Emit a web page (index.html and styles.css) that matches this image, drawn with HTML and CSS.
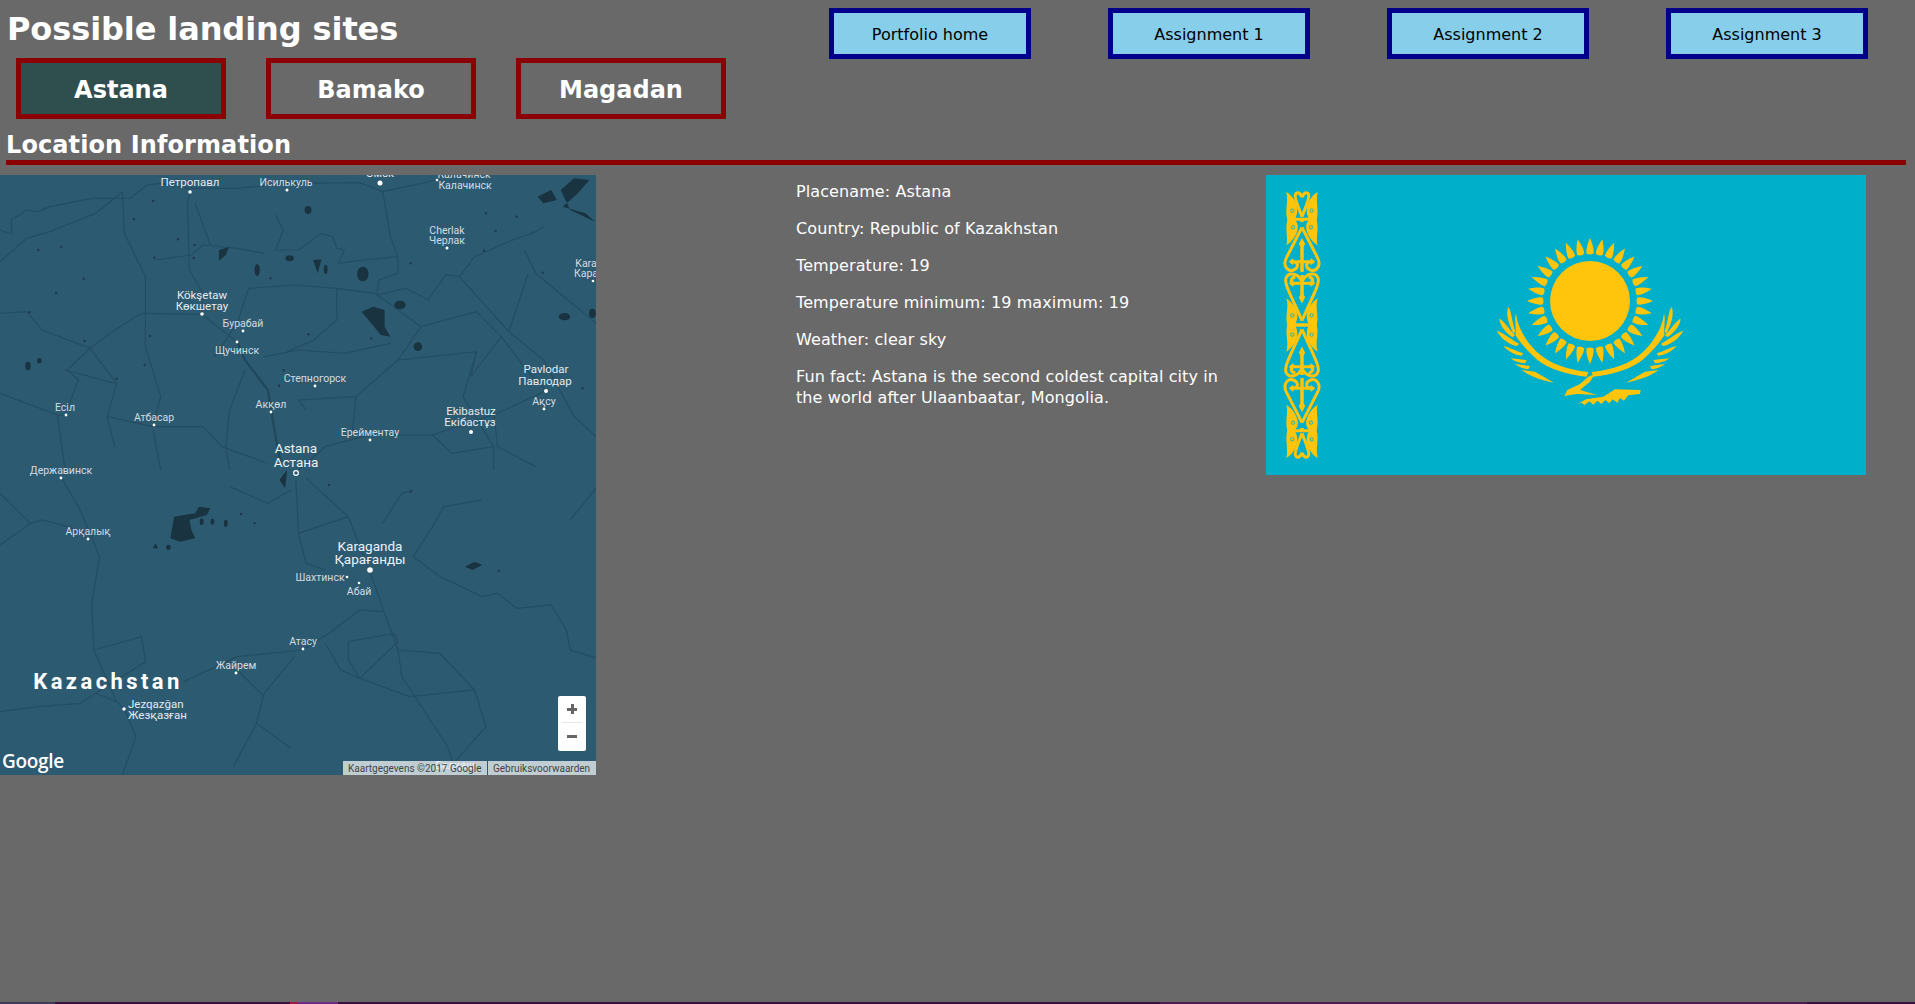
FILE: index.html
```html
<!DOCTYPE html>
<html>

<head>
    <meta http-equiv="Content-Type" content="text/html;charset=UTF-8" />
    <title>Possible landing sites</title>
    <link rel="stylesheet" href="styles.css">
</head>

<body>
    <div class="wrap">
        <div class="top_wrap">
            <div class="top_left">
                <h1 class="page_title">Possible landing sites</h1>
                <div class="site_list">
                    <a class="site_btn active">Astana</a>
                    <a class="site_btn">Bamako</a>
                    <a class="site_btn">Magadan</a>
                </div>
            </div>
            <nav class="main_nav">
                <a class="nav_btn">Portfolio home</a>
                <a class="nav_btn">Assignment 1</a>
                <a class="nav_btn">Assignment 2</a>
                <a class="nav_btn">Assignment 3</a>
            </nav>
        </div>
        <h2 class="section_title">Location Information</h2>
        <div class="content_wrap">
            <div class="map_box">
                <svg class="map_svg" width="596" height="600" viewBox="0 0 596 600">
                    <rect width="596" height="600" fill="#2c5a71" />
                    <!-- north half -->
                    <g transform="translate(0 -5) scale(.3827 .3333)">
                        <g class="road">
                            <path d="M0 180L30 192L30 148L60 130L65 120L100 125L130 110L240 85L340 85L385 45L420 40L490 55L620 55L750 40L940 38L1000 65L1140 30" />
                            <path d="M497 66L490 100L495 300L530 370L527 433L620 516" />
                            <path d="M0 430L70 425L110 480L235 535L300 480L370 430L527 433" />
                            <path d="M0 275L70 205L130 185L250 130L320 65" />
                            <path d="M235 535L175 600L205 630L170 735L150 735L170 900" />
                            <path d="M235 535L305 640L280 740L300 830" />
                            <path d="M280 740L400 770L530 770L580 830L700 880" />
                            <path d="M650 355L770 345L880 355L980 370L1100 470L1245 425L1310 500L1375 600L1427 662" />
                            <path d="M720 135L740 180L720 240L780 240L840 190L870 200L880 235L900 240L885 280L950 270L1040 260L1040 310L990 330L985 375L1060 355L1120 390L1130 370L1165 315L1200 320L1240 260L1340 210L1400 185L1420 170" />
                            <path d="M1200 320L1330 485L1420 570L1500 740L1558 800" />
                            <path d="M1370 240L1400 310L1568 470" />
                            <path d="M1040 570L1245 545L1230 620L1310 500" />
                            <path d="M690 560L780 540L900 550L1020 520" />
                            <path d="M1427 662L1300 730L1130 795L966 795L850 830L780 900" />
                            <path d="M650 355L620 460L560 560" />
                            <path d="M880 355L880 450L820 510L750 545" />
                            <path d="M1000 65L1020 200L1040 260" />
                            <path d="M1100 470L1040 570L930 680L780 690L800 720" />
                            <path d="M640 600L600 720L590 830L600 900" />
                            <path d="M1245 545L1210 680L1290 830L1290 900" />
                            <path d="M1330 485L1380 310" />
                            <path d="M0 670L150 735" />
                            <path d="M930 680L920 800" />
                            <path d="M320 65L325 190L380 320L380 530L420 680L400 770" />
                            <path d="M530 225L620 235L690 250" />
                            <path d="M405 270L500 255L530 225" />
                            <path d="M510 100L550 225" />
                            <path d="M1130 795L1180 850L1290 830" />
                            <path d="M1290 720L1300 830L1400 890" />
                            <path d="M400 780L420 900" />
                            <path d="M170 600L300 640" />
                        </g>
                        <path class="road_main" d="M620 516L640 570L700 660L720 800L735 890" />
                        <g class="lake">
                            <path d="M945 425L975 410L1005 420L1005 470L1020 500L995 495L970 460Z" />
                            <path d="M572 240L598 232L590 255L572 272Z" />
                            <path d="M1465 60L1500 25L1540 30L1510 70L1470 110L1530 130L1555 155L1490 120Z" />
                            <path d="M1405 80L1440 60L1455 90L1420 100Z" />
                            <path d="M818 270L840 268L830 310Z" />
                            <ellipse cx="672" cy="300" rx="7" ry="18" />
                            <ellipse cx="757" cy="265" rx="11" ry="9" />
                            <ellipse cx="805" cy="120" rx="9" ry="12" />
                            <ellipse cx="948" cy="312" rx="15" ry="22" />
                            <ellipse cx="1045" cy="405" rx="15" ry="13" />
                            <ellipse cx="851" cy="298" rx="5" ry="14" />
                            <ellipse cx="1092" cy="530" rx="11" ry="13" />
                            <ellipse cx="1475" cy="440" rx="15" ry="11" />
                            <ellipse cx="1548" cy="430" rx="9" ry="14" />
                            <ellipse cx="73" cy="588" rx="7" ry="13" />
                            <ellipse cx="103" cy="572" rx="6" ry="8" />
                        </g>
                        <path class="lake_dots" d="M400 93h0M350 148h0M465 208h0M508 225h0M403 263h0M506 264h0M707 325h0M1073 280h0M1418 308h0M1265 242h0M1522 655h0M147 369h0M219 326h0M77 427h0M392 498h0M378 585h0M305 626h0M729 647h0M741 601h0M806 493h0M970 505h0M1270 130h0M1350 140h0M1295 183h0M100 240h0M160 230h0M221 513h0" />
                    </g>
                    <!-- south half -->
                    <g transform="translate(0 295) scale(.3827 .3333)">
                        <g class="road">
                            <path d="M160 23L210 120L260 260L240 400L245 540L305 695" />
                            <path d="M773 30L780 190L800 280L850 300" />
                            <path d="M800 25L910 140L965 300L1005 430L1040 540L1050 620L1170 830L1190 900" />
                            <path d="M1000 160L1050 70L1080 60" />
                            <path d="M1080 260L1150 320L1260 380L1300 370L1350 415L1440 405L1480 480L1490 540L1560 565" />
                            <path d="M1260 90L1160 110L1130 170L1080 260" />
                            <path d="M480 635L620 560L790 540L860 490L940 420L1000 425" />
                            <path d="M0 225L80 160L110 150L180 170L230 207" />
                            <path d="M0 70L80 160" />
                            <path d="M0 725L100 710L210 700L250 670L305 695L325 717L355 800L320 915" />
                            <path d="M245 540L370 500L380 575L250 670" />
                            <path d="M690 670L770 560" />
                            <path d="M690 670L670 760L610 890" />
                            <path d="M620 600L690 680" />
                            <path d="M670 760L760 835" />
                            <path d="M850 520L890 600L940 625L1070 680L1240 660L1270 770L1170 900" />
                            <path d="M910 515L1030 490L1040 515L940 625L910 570Z" />
                            <path d="M1040 540L1150 550L1240 660" />
                            <path d="M780 190L910 140" />
                            <path d="M600 50L700 100L760 60" />
                            <path d="M1490 150L1560 50" />
                        </g>
                        <g class="lake">
                            <path d="M455 140L510 130L520 110L550 115L540 135L495 150L500 180L510 205L470 215L445 205Z" />
                            <path d="M730 30L750 0L745 55Z" />
                            <path d="M1215 290L1240 275L1260 285L1235 300Z" />
                            <path d="M400 235L406 220L413 235Z" />
                            <ellipse cx="440" cy="232" rx="6" ry="8" />
                            <ellipse cx="527" cy="155" rx="5" ry="10" />
                            <ellipse cx="555" cy="155" rx="5" ry="9" />
                            <ellipse cx="590" cy="160" rx="5" ry="11" />
                        </g>
                        <path class="lake_dots" d="M1303 302h0M1073 65h0M665 160h0M630 132h0M860 45h0" />
                    </g>
                    <g class="map_dots">
                        <circle cx="190" cy="17" r="1.8" /><circle cx="287" cy="15" r="1.5" />
                        <circle cx="380" cy="8" r="2.5" /><circle cx="437" cy="5" r="1.3" />
                        <circle cx="447" cy="73" r="1.5" /><circle cx="593" cy="106" r="1.3" />
                        <circle cx="202" cy="139" r="1.8" /><circle cx="243" cy="156" r="1.4" />
                        <circle cx="237" cy="167" r="1.4" /><circle cx="315" cy="211" r="1.4" />
                        <circle cx="546" cy="216" r="2" /><circle cx="271" cy="237" r="1.4" />
                        <circle cx="544" cy="234" r="1.4" /><circle cx="66" cy="240" r="1.4" />
                        <circle cx="154" cy="250" r="1.4" /><circle cx="471" cy="257" r="2" />
                        <circle cx="370" cy="265" r="1.4" /><circle cx="61" cy="303" r="1.4" />
                        <circle cx="88" cy="364" r="1.4" /><circle cx="370" cy="395" r="2.8" />
                        <circle cx="347" cy="402" r="1.3" /><circle cx="359" cy="408" r="1.3" />
                        <circle cx="303" cy="474" r="1.4" /><circle cx="236" cy="498" r="1.4" />
                        <circle cx="124" cy="534" r="1.7" />
                        <circle cx="296" cy="298" r="2.4" fill="none" stroke="#fff" stroke-width="1.2" />
                    </g>
                    <g class="map_label">
                        <text x="190" y="11">Петропавл</text>
                        <text x="286" y="11" class="small">Исилькуль</text>
                        <text x="380" y="2">Омск</text>
                        <text x="464" y="3" class="small">Калачинск</text>
                        <text x="465" y="14" class="small">Калачинск</text>
                        <text x="447" y="59" class="small">Cherlak</text>
                        <text x="447" y="69" class="small">Черлак</text>
                        <text x="586" y="92" class="small">Kara</text>
                        <text x="586" y="102" class="small">Кара</text>
                        <text x="202" y="124">Kökşetaw</text>
                        <text x="202" y="135">Көкшетау</text>
                        <text x="243" y="152" class="small">Бурабай</text>
                        <text x="237" y="179" class="small">Щучинск</text>
                        <text x="315" y="207" class="small">Степногорск</text>
                        <text x="546" y="198">Pavlodar</text>
                        <text x="545" y="210">Павлодар</text>
                        <text x="271" y="233" class="small">Акқөл</text>
                        <text x="544" y="230" class="small">Ақсу</text>
                        <text x="65" y="236" class="small">Есіл</text>
                        <text x="154" y="246" class="small">Атбасар</text>
                        <text x="471" y="240">Ekibastuz</text>
                        <text x="470" y="251">Екібастұз</text>
                        <text x="370" y="261" class="small">Ерейментау</text>
                        <text x="296" y="278" class="big">Astana</text>
                        <text x="296" y="292" class="big">Астана</text>
                        <text x="61" y="299" class="small">Державинск</text>
                        <text x="88" y="360" class="small">Арқалық</text>
                        <text x="370" y="376" class="big">Karaganda</text>
                        <text x="370" y="389" class="big">Қарағанды</text>
                        <text x="320" y="406" class="small">Шахтинск</text>
                        <text x="359" y="420" class="small">Абай</text>
                        <text x="303" y="470" class="small">Атасу</text>
                        <text x="236" y="494" class="small">Жайрем</text>
                        <text x="128" y="533" class="left">Jezqazğan</text>
                        <text x="128" y="544" class="left">Жезқазған</text>
                        <text x="455" y="594" class="small">Балқаш</text>
                        <text x="108" y="514" class="country">Kazachstan</text>
                    </g>
                </svg>
                <span class="map_logo">Google</span>
                <div class="map_zoom">
                    <button class="zoom_btn zoom_in"></button>
                    <button class="zoom_btn zoom_out"></button>
                </div>
                <div class="map_attr">
                    <span class="attr_item attr_data">Kaartgegevens ©2017 Google</span>
                    <span class="attr_item attr_terms">Gebruiksvoorwaarden</span>
                </div>
            </div>
            <div class="info_box">
                <p>Placename: Astana</p>
                <p>Country: Republic of Kazakhstan</p>
                <p>Temperature: 19</p>
                <p>Temperature minimum: 19 maximum: 19</p>
                <p>Weather: clear sky</p>
                <p>Fun fact: Astana is the second coldest capital city in the world after Ulaanbaatar, Mongolia.</p>
            </div>
            <svg class="flag" width="600" height="300" viewBox="0 0 600 300">
                <defs>
                    <path id="ray" d="M0 -63C3 -56 4 -51 3.6 -47.5Q0 -45.5 -3.6 -47.5C-4 -51 -3 -56 0 -63Z" />
                    <g id="orn_half">
                        <path class="orn_fill" d="M79 66C98 76 110 98 112 120C112 132 108 142 104 147H82C74 125 86 95 79 66Z" />
                        <path class="orn_fill" d="M82 150H104C112 156 116 168 112 182C106 202 94 216 79 226C86 205 74 178 82 150Z" />
                        <path class="orn_fill" d="M79 385C98 398 112 420 112 438C112 450 108 460 104 465H82C74 440 88 412 79 385Z" />
                        <path class="orn_line" d="M126 82C122 68 110 64 106 74C102 84 118 118 126 140" />
                        <path class="orn_line" d="M82 148H126M126 148V156" />
                        <path class="orn_line" d="M126 172L80 262C66 288 84 306 100 300C116 294 116 278 103 277" />
                        <path class="orn_line" d="M126 336C116 310 86 304 78 324C72 340 90 370 126 452" />
                        <path class="orn_line" d="M104 341C90 343 90 322 106 322" />
                        <path class="orn_line" d="M82 465H126" />
                        <path class="orn_line" d="M126 215V305M126 315V385M92 275H126M92 340H126" />
                        <path class="orn_fill" d="M126 205L135 222L126 236L117 222ZM126 400L135 382L126 368L117 382ZM86 275L100 264V286ZM86 340L100 329V351Z" />
                        <circle class="orn_hole" cx="97" cy="122" r="5" />
                        <circle class="orn_hole" cx="99" cy="172" r="5" />
                        <circle class="orn_hole" cx="97" cy="436" r="5" />
                    </g>
                    <g id="orn_unit">
                        <use href="#orn_half" />
                        <use href="#orn_half" transform="translate(252 0) scale(-1 1)" />
                    </g>
                    <g id="wing">
                        <path d="M108 280C112 318 132 358 170 395C210 432 260 448 325 456L320 470C260 464 205 447 170 418C145 395 122 370 106 345C110 325 102 300 108 280Z" />
                        <path d="M84 262C92 262 95 300 106 335L100 340C85 310 78 285 84 262Z" />
                        <path d="M58 296C70 300 85 325 105 345L98 352C80 340 60 320 58 296Z" />
                        <path d="M50 332C65 335 90 355 118 372L110 378C85 372 62 355 50 332Z" />
                        <path d="M70 378C85 380 105 392 130 400L125 407C105 405 85 395 70 378Z" />
                        <path d="M92 415L140 420L135 430C115 428 100 422 92 415Z" />
                        <path d="M105 432L150 438L145 448C125 445 115 440 105 432Z" />
                        <path d="M125 450L165 455L222 488C190 482 150 470 125 450Z" />
                    </g>
                </defs>
                <rect width="600" height="300" fill="#00afca" />
                <g transform="translate(-6 -5) scale(.3333)">
                    <use href="#orn_unit" />
                    <use href="#orn_unit" transform="translate(0 930) scale(1 -1)" />
                </g>
                <g class="gold" transform="translate(324 126)">
                    <circle r="40" />
                    <use href="#ray" />
                    <use href="#ray" transform="rotate(11.25)" />
                    <use href="#ray" transform="rotate(22.5)" />
                    <use href="#ray" transform="rotate(33.75)" />
                    <use href="#ray" transform="rotate(45)" />
                    <use href="#ray" transform="rotate(56.25)" />
                    <use href="#ray" transform="rotate(67.5)" />
                    <use href="#ray" transform="rotate(78.75)" />
                    <use href="#ray" transform="rotate(90)" />
                    <use href="#ray" transform="rotate(101.25)" />
                    <use href="#ray" transform="rotate(112.5)" />
                    <use href="#ray" transform="rotate(123.75)" />
                    <use href="#ray" transform="rotate(135)" />
                    <use href="#ray" transform="rotate(146.25)" />
                    <use href="#ray" transform="rotate(157.5)" />
                    <use href="#ray" transform="rotate(168.75)" />
                    <use href="#ray" transform="rotate(180)" />
                    <use href="#ray" transform="rotate(191.25)" />
                    <use href="#ray" transform="rotate(202.5)" />
                    <use href="#ray" transform="rotate(213.75)" />
                    <use href="#ray" transform="rotate(225)" />
                    <use href="#ray" transform="rotate(236.25)" />
                    <use href="#ray" transform="rotate(247.5)" />
                    <use href="#ray" transform="rotate(258.75)" />
                    <use href="#ray" transform="rotate(270)" />
                    <use href="#ray" transform="rotate(281.25)" />
                    <use href="#ray" transform="rotate(292.5)" />
                    <use href="#ray" transform="rotate(303.75)" />
                    <use href="#ray" transform="rotate(315)" />
                    <use href="#ray" transform="rotate(326.25)" />
                    <use href="#ray" transform="rotate(337.5)" />
                    <use href="#ray" transform="rotate(348.75)" />
                </g>
                <g class="gold" transform="translate(214 45) scale(.3333)">
                    <use href="#wing" />
                    <use href="#wing" transform="translate(660 0) scale(-1 1)" />
                    <path d="M253 528L262 510L300 492L325 470L345 462L330 485L300 510L352 525L290 522Z" />
                    <path d="M292 553L318 538L370 530L405 508L482 510L480 522L445 526L432 542L420 534L412 548L398 538L388 550L376 540L364 552L352 542L340 554L328 544L314 555L304 548Z" />
                </g>
            </svg>
        </div>
        <div class="page_spacer"></div>
        <div class="page_strip"></div>
    </div>
</body>

</html>
```

FILE: styles.css
```css
* {
    margin: 0;
    padding: 0;
    box-sizing: border-box;
}

html {
    background-color: #696969;
    color: #fff;
    font-family: "DejaVu Sans", Verdana, sans-serif;
    font-size: 16px;
}

.wrap {
    height: 100vh;
    display: flex;
    flex-direction: column;
    overflow: hidden;
}

.top_wrap {
    display: flex;
}

.top_left {
    width: 829px;
}

.page_title {
    height: 58px;
    padding: 9px 0 0 7px;
    font-size: 32px;
    line-height: 40px;
    font-weight: bold;
    letter-spacing: -0.1px;
}

.site_list {
    display: flex;
    gap: 40px;
    padding-left: 16px;
}

.site_btn {
    width: 210px;
    height: 61px;
    border: 5px solid #8b0000;
    font-size: 24px;
    font-weight: bold;
    line-height: 55px;
    text-align: center;
}

.site_btn.active {
    background: #2f4f4f;
}

.main_nav {
    display: flex;
    gap: 77px;
    padding-top: 8px;
    align-items: flex-start;
}

.nav_btn {
    width: 202px;
    height: 51px;
    border: 5px solid #00008b;
    background: #87ceeb;
    color: #000;
    font-size: 16px;
    line-height: 43px;
    text-align: center;
}

.section_title {
    height: 46px;
    margin: 0 9px 0 6px;
    padding-top: 8px;
    border-bottom: 5px solid #8b0000;
    font-size: 24px;
    line-height: 36px;
    font-weight: bold;
    letter-spacing: .1px;
}

.content_wrap {
    display: grid;
    grid-template-columns: 796px 470px 600px;
    margin-top: 10px;
}

.map_box {
    position: relative;
    width: 596px;
    height: 600px;
    overflow: hidden;
}

.map_svg {
    display: block;
}

.road path {
    fill: none;
    stroke: #234e64;
    stroke-width: 1.2px;
    vector-effect: non-scaling-stroke;
}

.road_main {
    fill: none;
    stroke: #1f4a5e;
    stroke-width: 2.5px;
    vector-effect: non-scaling-stroke;
}

.lake {
    fill: #193341;
}

.lake_dots {
    fill: none;
    stroke: #1d3d4e;
    stroke-width: 2.5px;
    stroke-linecap: round;
    vector-effect: non-scaling-stroke;
}

.map_dots {
    fill: #fff;
}

.map_label text {
    fill: #e4eaee;
    font-family: Roboto, sans-serif;
    font-size: 11.5px;
    text-anchor: middle;
}

.map_label .small {
    font-size: 10.5px;
    fill: #d3dce1;
}

.map_label .big {
    font-size: 13.5px;
    fill: #eef2f4;
}

.map_label .left {
    text-anchor: start;
}

.map_label .country {
    font-size: 22px;
    font-weight: bold;
    letter-spacing: 3.4px;
    fill: #fff;
}

.map_logo {
    position: absolute;
    left: 2px;
    bottom: 2px;
    font-family: "Open Sans", sans-serif;
    font-size: 19px;
    font-weight: 600;
    letter-spacing: -0.3px;
    line-height: 24px;
    color: #fff;
}

.map_zoom {
    position: absolute;
    left: 558px;
    top: 521px;
    width: 28px;
    height: 55px;
    padding: 0 4px;
    background: #fff;
    border-radius: 2px;
}

.zoom_btn {
    display: block;
    position: relative;
    width: 20px;
    height: 27px;
    border: 0;
    background: none;
}

.zoom_in {
    border-bottom: 1px solid #e6e6e6;
}

.zoom_btn::before,
.zoom_in::after {
    content: "";
    position: absolute;
    background: #666;
}

.zoom_btn::before {
    left: 5px;
    width: 10px;
    height: 3px;
    top: 12px;
}

.zoom_in::after {
    left: 8.5px;
    top: 8px;
    width: 3px;
    height: 10px;
}

.map_attr {
    position: absolute;
    right: 0;
    bottom: 0;
    display: flex;
    gap: 1px;
    font-family: Roboto, sans-serif;
    font-size: 10px;
    line-height: 16px;
    color: #444;
}

.attr_item {
    height: 14px;
    background: rgba(255, 255, 255, .7);
    padding: 0 5px;
    white-space: nowrap;
    overflow: hidden;
}

.attr_data {
    width: 144px;
}

.attr_terms {
    width: 108px;
}

.info_box {
    padding: 6px 36px 0 0;
    line-height: 21px;
    letter-spacing: .1px;
}

.info_box p {
    margin-bottom: 16px;
}

.flag {
    display: block;
}

.gold {
    fill: #fec50c;
}

.orn_fill {
    fill: #fec50c;
}

.orn_line {
    fill: none;
    stroke: #fec50c;
    stroke-width: 9;
}

.orn_hole {
    fill: none;
    stroke: #00afca;
    stroke-width: 2.5;
}

.page_spacer {
    flex: 1;
}

.page_strip {
    height: 2px;
    background: linear-gradient(to right,
        #3f3a55 0, #3f3a55 55px,
        #351038 55px, #351038 290px,
        #a8153f 290px, #a8153f 297px,
        #6e2a86 297px, #6e2a86 338px,
        #351038 338px, #351038 1160px,
        #4a1f50 1160px, #4a1f50 1807px,
        #351038 1807px);
}
```
